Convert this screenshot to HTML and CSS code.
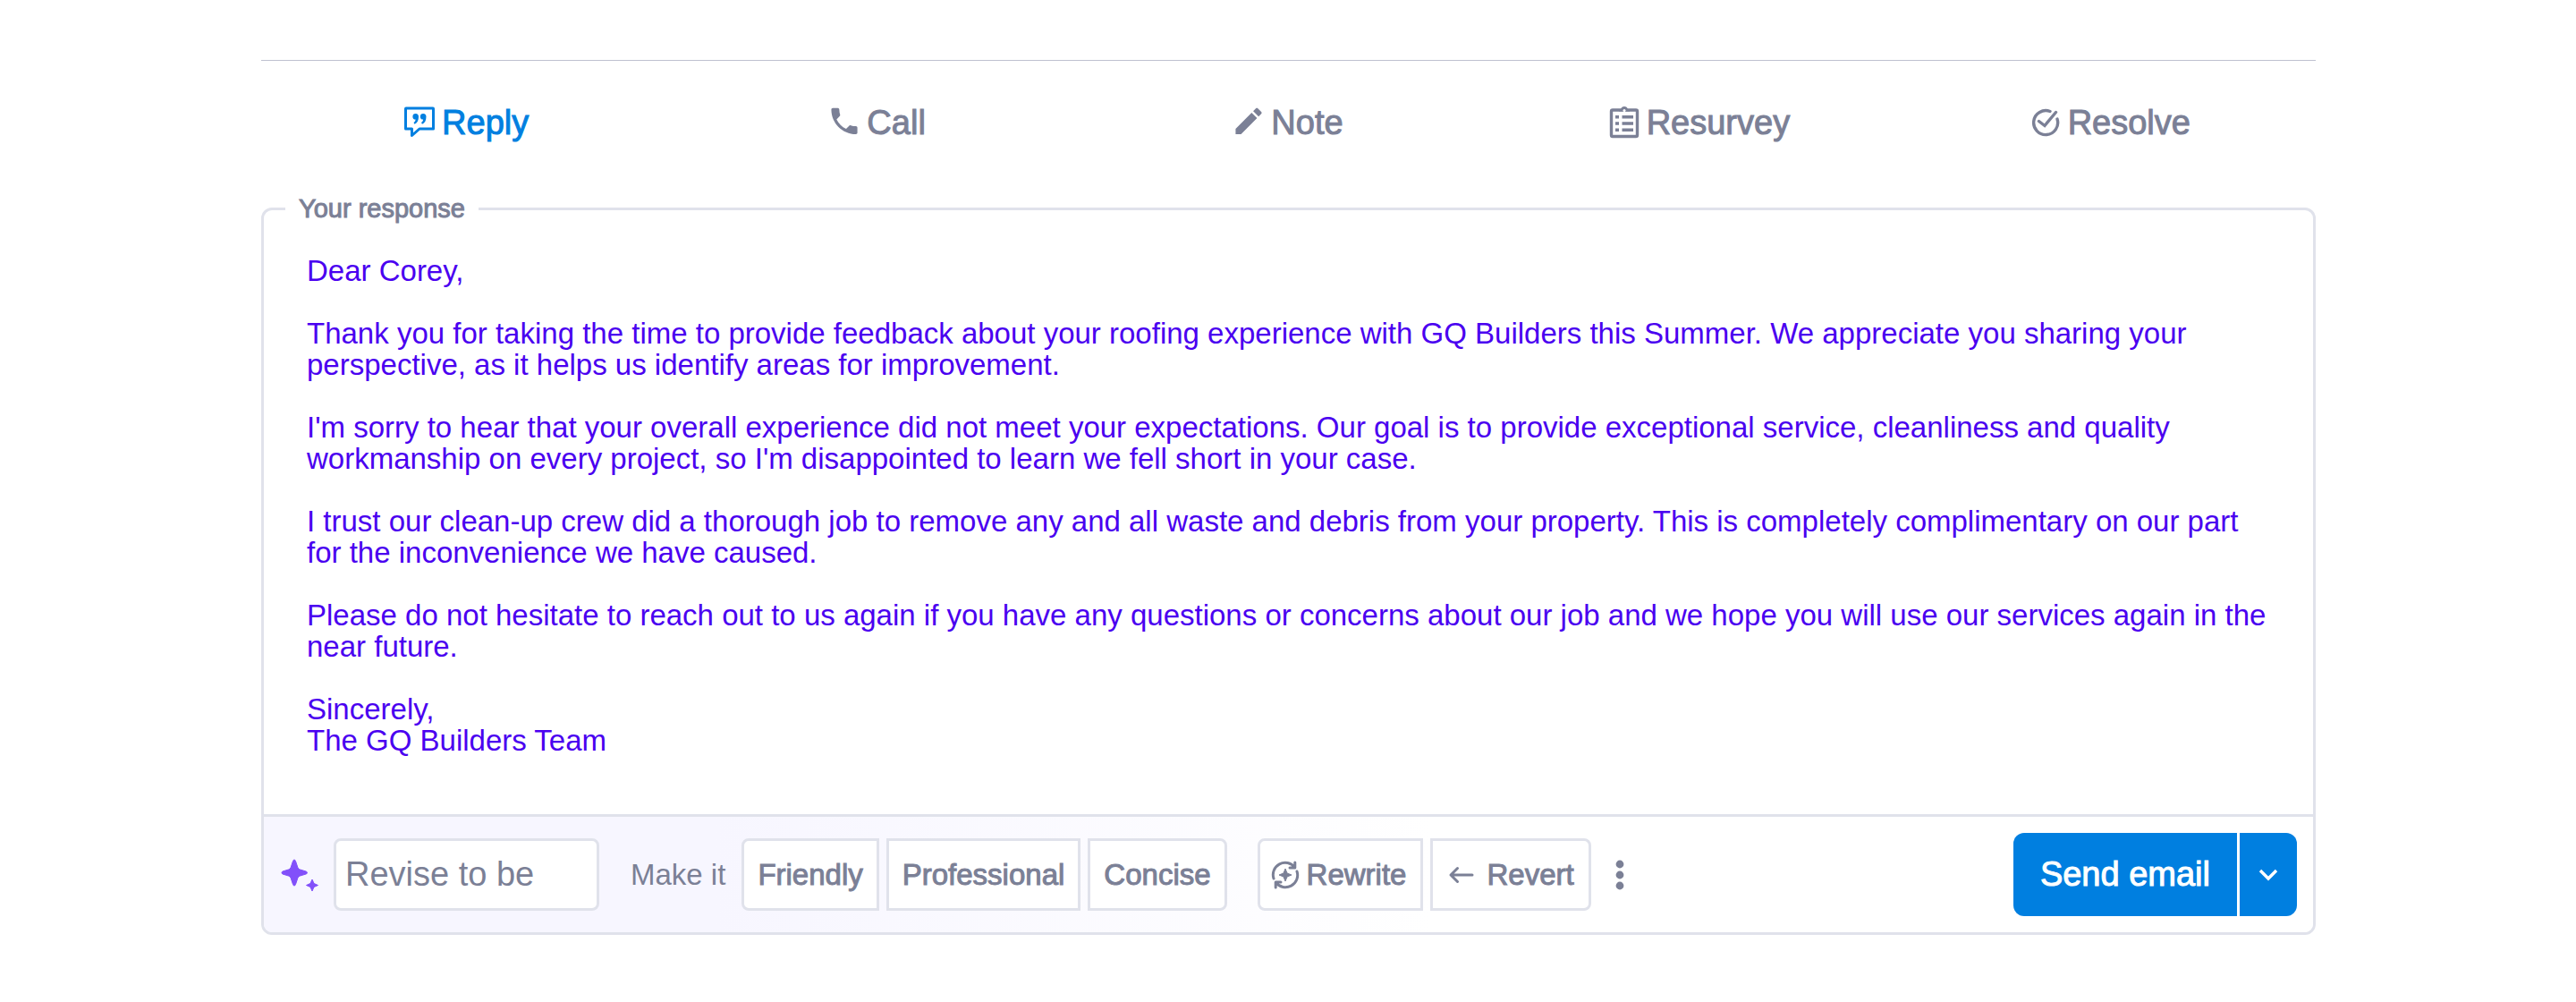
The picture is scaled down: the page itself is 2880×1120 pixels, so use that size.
FILE: index.html
```html
<!DOCTYPE html>
<html lang="en">
<head>
  <meta charset="UTF-8">
  <title>Respond</title>

  <link rel="stylesheet" href="styles.css">
</head>
<body>
  <main class="page">
    <nav class="tabs">
      <a class="tab active" href="#reply">
        <svg class="tab-icon" viewBox="0 0 34 36">
          <path d="M2 2H32Q32.5 2 32.5 2.5V25H17L8.500 32.5V25H1.5V2.5Q1.5 2 2 2Z" fill="none" stroke="currentColor" stroke-width="3" stroke-linejoin="round"/>
          <path d="M12.8 8a3.2 3.2 0 0 1 3.2 3.5c0 4-1.5 7-4.5 8.3l-1-1.8c1.400-.8 2-1.8 2.1-3.4a3.3 3.3 0 0 1 .2-6.600zM21.3 8a3.2 3.2 0 0 1 3.2 3.5c0 4-1.5 7-4.5 8.3l-1-1.8c1.400-.8 2-1.8 2.1-3.4a3.3 3.3 0 0 1 .2-6.600z" fill="currentColor"/>
        </svg>
        Reply
      </a>
      <a class="tab" href="#call">
        <svg class="tab-icon" viewBox="1.5 2 21 22">
          <path d="M6.62 10.79c1.44 2.83 3.76 5.14 6.59 6.59l2.2-2.2c.27-.27.67-.36 1.02-.24 1.12.37 2.33.57 3.57.57.55 0 1 .45 1 1V20c0 .55-.45 1-1 1-9.39 0-17-7.61-17-17 0-.55.45-1 1-1h3.5c.55 0 1 .45 1 1 0 1.25.2 2.45.57 3.57.11.35.03.74-.25 1.02l-2.2 2.2z" fill="currentColor"/>
        </svg>
        Call
      </a>
      <a class="tab" href="#note">
        <svg class="tab-icon" viewBox="1.5 2 21 22">
          <path d="M3 17.25V21h3.75L17.81 9.94l-3.75-3.75L3 17.25zM20.71 7.04c.39-.39.39-1.02 0-1.41l-2.34-2.34c-.39-.39-1.02-.39-1.41 0l-1.83 1.83 3.75 3.75 1.83-1.83z" fill="currentColor"/>
        </svg>
        Note
      </a>
      <a class="tab" href="#resurvey">
        <svg class="tab-icon" viewBox="0 0 34 36">
          <rect x="2.5" y="4" width="29" height="29.5" rx="1.5" fill="none" stroke="currentColor" stroke-width="3.4"/>
          <path d="M11 5.5V3h2a4.2 4.2 0 0 1 8 0h2v2.5z" fill="currentColor"/>
          <circle cx="17" cy="4.5" r="1.5" fill="#fff"/>
          <path d="M7 10h4v3.6H7zM14.5 10H27v3.6H14.5zM7 17.2h4v3.6H7zM14.5 17.2H27v3.6H14.5zM7 24.4h4V28H7zM14.5 24.4H27V28H14.5z" fill="currentColor"/>
        </svg>
        Resurvey
      </a>
      <a class="tab" href="#resolve">
        <svg class="tab-icon" viewBox="0 0 34 36">
          <path d="M22 5.500A13.5 13.5 0 1 0 30 14M9.5 16.5L16 21.5L28.5 6.500" fill="none" stroke="currentColor" stroke-width="3.4" stroke-linecap="round"/>
        </svg>
        Resolve
      </a>
    </nav>

    <fieldset class="composer">
      <legend class="composer-title"><label for="response">Your response</label></legend>
      <textarea class="response" id="response" rows="16">Dear Corey,

Thank you for taking the time to provide feedback about your roofing experience with GQ Builders this Summer. We appreciate you sharing your perspective, as it helps us identify areas for improvement.

I'm sorry to hear that your overall experience did not meet your expectations. Our goal is to provide exceptional service, cleanliness and quality workmanship on every project, so I'm disappointed to learn we fell short in your case.

I trust our clean-up crew did a thorough job to remove any and all waste and debris from your property. This is completely complimentary on our part for the inconvenience we have caused.

Please do not hesitate to reach out to us again if you have any questions or concerns about our job and we hope you will use our services again in the near future.

Sincerely,
The GQ Builders Team</textarea>

      <div class="toolbar">
        <svg class="sparkle" viewBox="0 0 40 40">
          <path d="M14 3Q15 3 15.5 4.5L18 12Q19 13.5 20.5 14L27 16Q28.5 16.5 28.5 17.5T27 19L20.5 21Q19 21.5 18 23L15.5 30.5Q15 32 14 32T12.5 30.5L10 23Q9 21.5 7.5 21L1 19Q0 18.5 0 17.5T1 16L7.5 14Q9 13.5 10 12L12.5 4.5Q13 3 14 3ZM34 25L36 29.5L40.5 31.5L36 33.5L34 38L32 33.5L27.5 31.5L32 29.5Z" fill="#8250fa" stroke="#8250fa" stroke-linejoin="round"/>
        </svg>
        <input class="revise" type="text" placeholder="Revise to be" aria-label="Revise to be">

        <span class="tone-label" id="tone-label">Make it</span>
        <div class="btn-group" role="group" aria-labelledby="tone-label">
          <button class="btn" type="button">Friendly</button>
          <button class="btn" type="button">Professional</button>
          <button class="btn" type="button">Concise</button>
        </div>

        <div class="btn-group edit-group">
          <button class="btn btn-with-icon" type="button">
            <svg class="rewrite-icon" viewBox="0 0 32 32">
              <path d="M3 20A13.5 13.5 0 0 1 26.5 7.5M26.8 2V8H21M29 12A13.5 13.5 0 0 1 5.5 24.5M5.2 30V24H11" fill="none" stroke="currentColor" stroke-width="3" stroke-linecap="round" stroke-linejoin="round"/>
              <path d="M16 9L18 14L23 16L18 18L16 23L14 18L9 16L14 14Z" fill="currentColor" stroke="currentColor" stroke-linejoin="round"/>
            </svg>
            Rewrite
          </button>
          <button class="btn btn-with-icon" type="button">
            <svg class="revert-icon" viewBox="0 0 40 32">
              <path d="M8 16H32M15.5 8.500L8 16L15.5 23.5" fill="none" stroke="currentColor" stroke-width="3" stroke-linecap="round" stroke-linejoin="round"/>
            </svg>
            Revert
          </button>
        </div>

        <button class="more" type="button" aria-label="More">
          <svg class="more-icon" viewBox="0 0 12 36">
            <circle cx="6" cy="6" r="4.4"/>
            <circle cx="6" cy="18" r="4.4"/>
            <circle cx="6" cy="30" r="4.4"/>
          </svg>
        </button>

        <div class="send-group">
          <button class="send" type="button">Send email</button>
          <button class="send-options" type="button" aria-label="Send options">
            <svg class="chevron" viewBox="0 0 24 24">
              <path d="M3 7L12 16L21 7" fill="none" stroke="currentColor" stroke-width="3.4"/>
            </svg>
          </button>
        </div>
      </div>
    </fieldset>
  </main>
</body>
</html>
```

FILE: styles.css
```css
* {
  box-sizing: border-box;
}

body {
  margin: 0;
  background-color: #fff;
  color: #7b8096;
  font-family: "Liberation Sans", Arial, sans-serif;
}

button,
input,
textarea {
  color: inherit;
  font-family: inherit;
}

button {
  cursor: pointer;
}

.page {
  margin: 67px 291px 0 292px;
  border-top: 1px solid #bfc1d0;
}

/* tabs */

.tabs {
  display: grid;
  grid-template-columns: repeat(5, 1fr);
  padding: 47px 0 58px;
}

.tab {
  display: flex;
  align-items: center;
  justify-content: center;
  gap: 8px;
  color: inherit;
  font-size: 38px;
  line-height: 44px;
  text-decoration: none;
  -webkit-text-stroke: 1px currentColor;
}

.active {
  color: #007fe0;
}

.tab-icon {
  width: 34px;
  height: 36px;
}

/* composer */

.composer {
  margin: 0;
  padding: 0;
  border: 3px solid #e0e2eb;
  border-radius: 12px;
}

.composer-title {
  margin-left: 24px;
  padding: 0 15px;
  font-size: 29px;
  line-height: 32px;
  -webkit-text-stroke: 1px currentColor;
}

.response {
  display: block;
  width: 100%;
  padding: 36px 48px 65px;
  border: 0;
  background: none;
  color: #4a00f0;
  font-size: 33px;
  line-height: 35px;
  outline: none;
  overflow: hidden;
  resize: none;
}

/* toolbar */

.toolbar {
  display: flex;
  align-items: center;
  padding: 18px 18px 18px 20px;
  border-top: 3px solid #e0e2eb;
  border-radius: 0 0 9px 9px;
  background: linear-gradient(90deg, #f7f6ff 22%, #fff 57%);
  font-size: 33px;
}

.sparkle {
  width: 40px;
  height: 40px;
  margin-right: 18px;
  overflow: visible;
}

.revise {
  width: 297px;
  height: 81px;
  padding: 0 10px;
  border: 3px solid #e0e2eb;
  border-radius: 8px;
  background-color: #fff;
  font-size: 38px;
}

.revise::placeholder {
  color: #7b8096;
}

.tone-label {
  margin: 0 18px 0 35px;
}

.btn-group {
  display: flex;
  gap: 8px;
}

.edit-group {
  margin-left: 34px;
}

.btn {
  display: flex;
  align-items: center;
  height: 81px;
  padding: 0 15px;
  border: 3px solid #e0e2eb;
  background-color: #fff;
  font-size: 33px;
  -webkit-text-stroke: 1px currentColor;
}

.btn:first-child {
  border-radius: 8px 0 0 8px;
}

.btn:last-child {
  border-radius: 0 8px 8px 0;
}

.btn-with-icon {
  gap: 8px;
  padding: 0 16px 0 12px;
}

.rewrite-icon {
  width: 32px;
  height: 32px;
}

.revert-icon {
  width: 40px;
  height: 32px;
}

.more {
  margin-left: 14px;
  padding: 12px;
  border: 0;
  background: none;
}

.more-icon {
  display: block;
  width: 12px;
  height: 36px;
  fill: currentColor;
}

.send-group {
  display: flex;
  gap: 3px;
  margin-left: auto;
}

.send,
.send-options {
  height: 93px;
  border: 0;
  background-color: #007fe0;
  color: #fff;
}

.send {
  padding: 0 30px;
  border-radius: 12px 0 0 12px;
  font-size: 38px;
  -webkit-text-stroke: 1px currentColor;
}

.send-options {
  padding: 0 20px;
  border-radius: 0 12px 12px 0;
}

.chevron {
  display: block;
  width: 24px;
  height: 24px;
}
```
